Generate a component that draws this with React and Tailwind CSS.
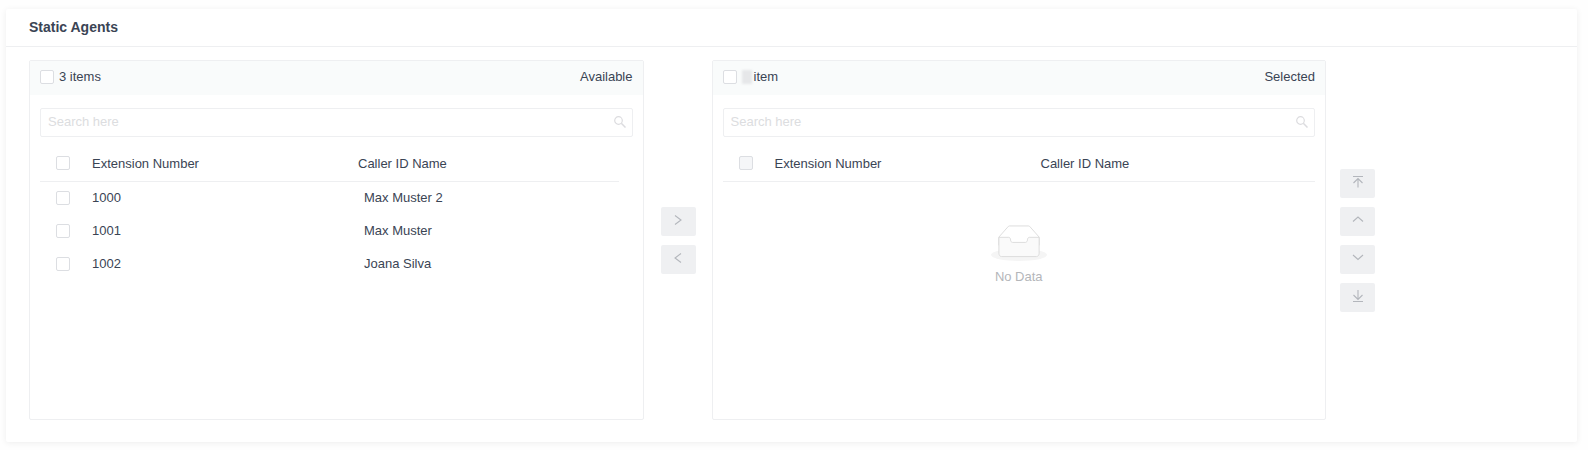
import { useId } from "react";

const agents = [
  { extension: "1000", name: "Max Muster 2" },
  { extension: "1001", name: "Max Muster" },
  { extension: "1002", name: "Joana Silva" },
];

function Checkbox({ id, label, disabled }) {
  return (
    <input
      id={id}
      type="checkbox"
      aria-label={label}
      disabled={disabled}
      className="block size-3.5 shrink-0 appearance-none rounded-xs border border-[#dcdee2] bg-white checked:bg-[#4a90e2] disabled:bg-[#f5f6f8]"
    />
  );
}

function SearchIcon() {
  return (
    <svg viewBox="0 0 12 12" className="size-3 shrink-0" fill="none" stroke="#dcdcdf" aria-hidden="true">
      <circle cx="4.5" cy="4.5" r="3.8" strokeWidth="1.2" />
      <path d="M7.3 7.3 11.5 11.5" strokeWidth="1.5" />
    </svg>
  );
}

function EmptyState() {
  return (
    <div className="flex flex-col items-center pt-[43px]">
      <svg viewBox="0 0 64 41" className="h-9 w-14" aria-hidden="true">
        <g transform="translate(0 1)" fill="none" fillRule="evenodd">
          <ellipse fill="#f5f5f5" cx="32" cy="33" rx="32" ry="7" />
          <g fillRule="nonzero" stroke="#d9d9d9">
            <path
              fill="#fff"
              d="M55 12.76L44.854 1.258C44.367.474 43.656 0 42.907 0H21.093c-.749 0-1.46.474-1.947 1.257L9 12.761V22h46v-9.24z"
            />
            <path
              fill="#fafafa"
              d="M41.613 15.931c0-1.605.994-2.93 2.227-2.931H55v18.137C55 33.26 53.68 35 52.05 35h-40.1C10.32 35 9 33.259 9 31.137V13h11.16c1.233 0 2.227 1.323 2.227 2.928v.022c0 1.605 1.005 2.901 2.237 2.901h14.752c1.232 0 2.237-1.308 2.237-2.913v-.007z"
            />
          </g>
        </g>
      </svg>
      <p className="mt-2 leading-4 text-[#b4b6ba]">No Data</p>
    </div>
  );
}

function Panel({ title, count, rows, inset }) {
  const id = useId();
  return (
    <section className="h-[360px] min-w-0 flex-1 rounded-xs border border-[#eeeff1]">
      <header className="flex h-[34px] items-center justify-between bg-[#f9fbfb] px-2.5 pb-0.5">
        <div className="flex items-center gap-[5px]">
          <Checkbox id={id} />
          <label htmlFor={id} className="flex items-center gap-0.5">
            {count}
          </label>
        </div>
        <span>{title}</span>
      </header>
      <div className="px-2.5 pt-[13px]">
        <div className="flex h-[29px] items-center rounded-xs border border-[#eeeff1] pr-1.5 pb-0.5 pl-[7px]">
          <input
            type="text"
            aria-label={`Search ${title}`}
            placeholder="Search here"
            className="min-w-0 flex-1 bg-transparent outline-none placeholder:text-[#dcdde0]"
          />
          <SearchIcon />
        </div>
        <div className={inset}>
          <table className="mt-[9px] w-full table-fixed border-collapse text-left">
            <thead>
              <tr className="h-[35px] border-b border-[#eeeff1]">
                <th className="w-11 pl-4">
                  <Checkbox label={`Select all ${title}`} disabled={rows.length === 0} />
                </th>
                <th className="w-[266px] pl-2 font-normal">Extension Number</th>
                <th className="pl-2 font-normal">Caller ID Name</th>
              </tr>
            </thead>
            <tbody>
              {rows.map((row) => (
                <tr key={row.extension} className="h-[33px]">
                  <td className="pl-4">
                    <Checkbox label={`Select ${row.extension}`} />
                  </td>
                  <td className="pl-2">{row.extension}</td>
                  <td className="pl-3.5">{row.name}</td>
                </tr>
              ))}
            </tbody>
          </table>
        </div>
        {rows.length === 0 && <EmptyState />}
      </div>
    </section>
  );
}

function IconButton({ label, path }) {
  return (
    <button
      type="button"
      aria-label={label}
      className="flex h-[29px] w-[35px] items-center justify-center rounded-xs bg-[#eff0f2] pb-0.5"
    >
      <svg
        viewBox="0 0 14 14"
        className="size-3.5"
        fill="none"
        stroke="#b3b6bc"
        strokeWidth="1.1"
        aria-hidden="true"
      >
        <path d={path} />
      </svg>
    </button>
  );
}

export default function App() {
  return (
    <main className="bg-[#fefefe] pt-[9px] pr-[11px] pb-2 pl-1.5 font-['Liberation_Sans',Arial,sans-serif] text-[13px] text-[#3a4454]">
      <div className="rounded-xs bg-white shadow-[0_1px_6px_rgba(0,0,0,0.07)]">
        <h2 className="border-b border-[#eeeff1] px-[23px] pt-2 pb-2 text-sm leading-[21px] font-bold">
          Static Agents
        </h2>
        <div className="px-[23px] pt-[13px] pb-[22px]">
          <div className="flex max-w-[1346px] items-center">
            <Panel title="Available" count="3 items" rows={agents} inset="pr-3.5" />
            <div className="flex flex-col gap-[9px] pr-4 pl-[17px]">
              <IconButton label="Add selected" path="M4 2.5 10 7 4 11.5" />
              <IconButton label="Remove selected" path="M10 2.5 4 7 10 11.5" />
            </div>
            <Panel
              title="Selected"
              count={
                <>
                  <span className="h-3.5 w-2.5 bg-[#e6e7e9] blur-[1px]" />
                  item
                </>
              }
              rows={[]}
              inset="pr-0"
            />
            <div className="flex flex-col gap-[9px] pl-3.5">
              <IconButton label="Move to top" path="M2 1.5H12M7 12.5V3.5M2.5 8 7 3.5 11.5 8" />
              <IconButton label="Move up" path="M2 8.5 7 4 12 8.5" />
              <IconButton label="Move down" path="M2 4 7 8.5 12 4" />
              <IconButton label="Move to bottom" path="M2 12.5H12M7 1V10.5M2.5 6 7 10.5 11.5 6" />
            </div>
          </div>
        </div>
      </div>
    </main>
  );
}
